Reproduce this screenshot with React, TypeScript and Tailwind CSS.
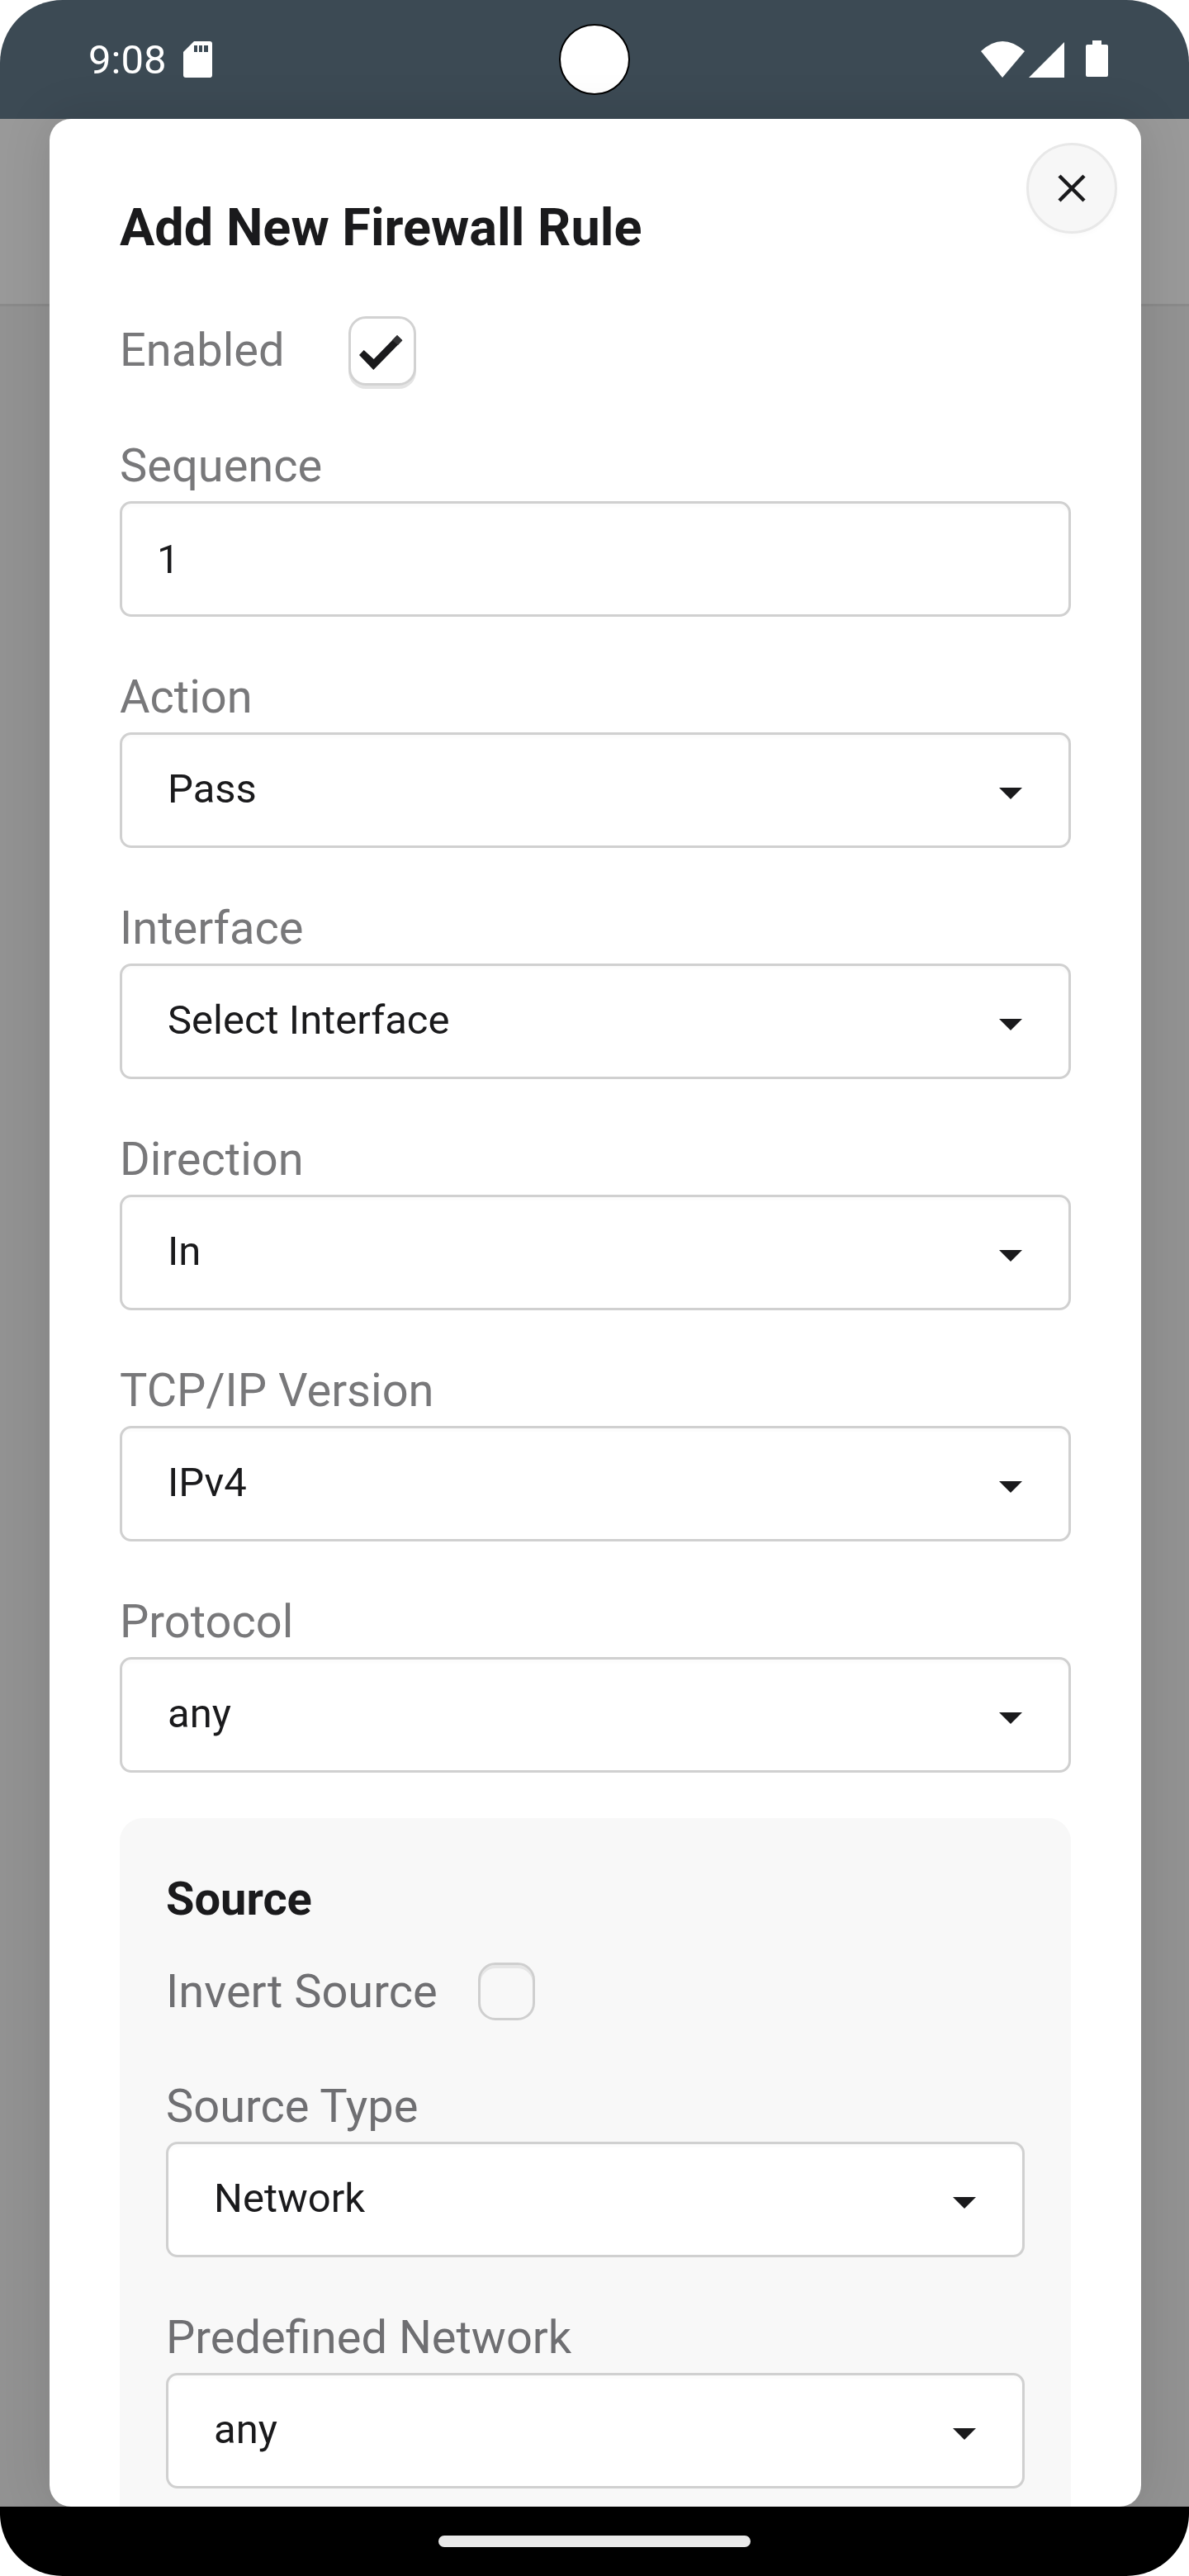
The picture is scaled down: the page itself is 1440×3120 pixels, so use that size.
import React from "react";

const Arrow = () => (
  <svg width="28" height="14" viewBox="0 0 28 14" className="absolute right-[56px] top-[64px]">
    <path d="M0 0H28L14 14Z" fill="#1a1a1c" />
  </svg>
);

const Field = ({ label, value, select, dark }: { label: string; value: string; select?: boolean; dark?: boolean }) => (
  <div>
    <div className={`h-[74px] mb-[6px] text-[56px] leading-[74px] ${dark ? "text-[#6f6f72]" : "text-[#78787a]"}`}>{label}</div>
    <div className="relative h-[140px] rounded-[14px] border-[3.5px] border-[#d0d0d0] bg-white shadow-[inset_0_4px_3px_rgba(0,0,0,0.015)] flex items-center">
      <span className={`text-[49px] leading-none text-[#1a1a1c] ${select ? "pl-[55px] pb-[4px]" : "pl-[42px]"}`}>{value}</span>
      {select && <Arrow />}
    </div>
  </div>
);

export default function App() {
  return (
    <div className="w-[1440px] h-[3120px] bg-white" style={{ fontFamily: "Roboto, sans-serif" }}>
      <div className="w-full h-full rounded-[76px] overflow-hidden flex flex-col">
        <div className="relative h-[144px] shrink-0 bg-[#3c4a54] flex items-center justify-between pl-[107px] pr-[98px] text-white">
          <div className="flex items-center gap-[21px]">
            <span className="text-[49px] leading-none">9:08</span>
            <svg width="35" height="44" viewBox="0 0 35 44">
              <path d="M13 0H32Q35 0 35 3V41Q35 44 32 44H3Q0 44 0 41V13Z" fill="#fff" />
              <path d="M13 5h4v8h-4zM19 5h4v8h-4zM25 5h5v8h-5z" fill="#3c4a54" />
            </svg>
          </div>
          <div className="absolute left-[677px] top-[29px] w-[86px] h-[86px] rounded-full bg-white border-[2px] border-black" />
          <svg width="155" height="46" viewBox="1187 49 155 46">
            <path d="M1188 62Q1214 38 1241 62L1214 94Z" fill="#fff" />
            <path d="M1246 94H1289V51Z" fill="#fff" />
            <path d="M1323 49H1334V54H1340Q1342 54 1342 56V91Q1342 93 1340 93H1317Q1315 93 1315 91V56Q1315 54 1317 54H1323Z" fill="#fff" />
          </svg>
        </div>

        <div className="relative flex-1 min-h-0 bg-[#929292]">
          <div className="h-[227px] bg-[#999999] border-b-[3px] border-[#8a8a8a]" />
          <div className="absolute left-[60px] right-[58px] top-0 bottom-0 rounded-[26px] bg-white overflow-hidden px-[85px] pt-[88px] shadow-[0_0_60px_rgba(0,0,0,0.12)]">
            <button className="absolute left-[1183px] top-[29px] w-[110px] h-[110px] rounded-full bg-[#f7f7f7] border-[3.5px] border-[#e8e8e8] shadow-[0_3px_6px_rgba(0,0,0,0.02)] flex items-center justify-center">
              <svg width="34" height="34" viewBox="0 0 34 34">
                <path d="M2 2L32 32M32 2L2 32" stroke="#1a1a1c" strokeWidth="4.5" />
              </svg>
            </button>

            <h1 className="text-[63px] leading-[88px] font-bold text-[#1a1a1c]">Add New Firewall Rule</h1>

            <div className="mt-[63px] mb-[60px] flex items-center h-[84px]">
              <span className="w-[277px] text-[56px] leading-[80px] pb-[2px] text-[#78787a]">Enabled</span>
              <div className="relative w-[82px] h-[84px]">
                <div className="absolute inset-0 rounded-[21px] border-[3.5px] border-[#d2d2d2] bg-white shadow-[0_4px_0_#e4e4e4]" />
                <svg width="82" height="84" viewBox="0 0 82 84" className="absolute inset-0">
                  <path d="M13 47L18.7 41L30.7 52L59 23L65.3 29.3L30.3 65Z" fill="#1a1a1c" />
                  <path d="M59 23L65.3 29.3L60 35L53 29Z" fill="#333335" />
                </svg>
              </div>
            </div>

            <div className="flex flex-col gap-[60px] mb-[55px]">
              <Field label="Sequence" value="1" />
              <Field label="Action" value="Pass" select />
              <Field label="Interface" value="Select Interface" select />
              <Field label="Direction" value="In" select />
              <Field label="TCP/IP Version" value="IPv4" select />
              <Field label="Protocol" value="any" select />
            </div>

            <div className="rounded-[28px] bg-[#f8f8f8] p-[56px]">
              <h2 className="text-[56px] leading-[80px] pt-[2px] -mb-[2px] font-bold text-[#1a1a1c]">Source</h2>
              <div className="mt-[39px] mb-[67px] flex items-center h-[70px]">
                <span className="w-[378px] text-[56px] leading-[70px] text-[#6f6f72]">Invert Source</span>
                <div className="w-[69px] h-[70px] rounded-[21px] border-[3.5px] border-[#cfcfcf] shadow-[inset_0_4px_0_#e6e6e6]" />
              </div>
              <div className="flex flex-col gap-[60px]">
                <Field label="Source Type" value="Network" select dark />
                <Field label="Predefined Network" value="any" select dark />
              </div>
            </div>
          </div>
        </div>

        <div className="h-[84px] shrink-0 bg-black flex items-center justify-center">
          <div className="w-[378px] h-[14px] rounded-full bg-[#ebebeb]" />
        </div>
      </div>
    </div>
  );
}
